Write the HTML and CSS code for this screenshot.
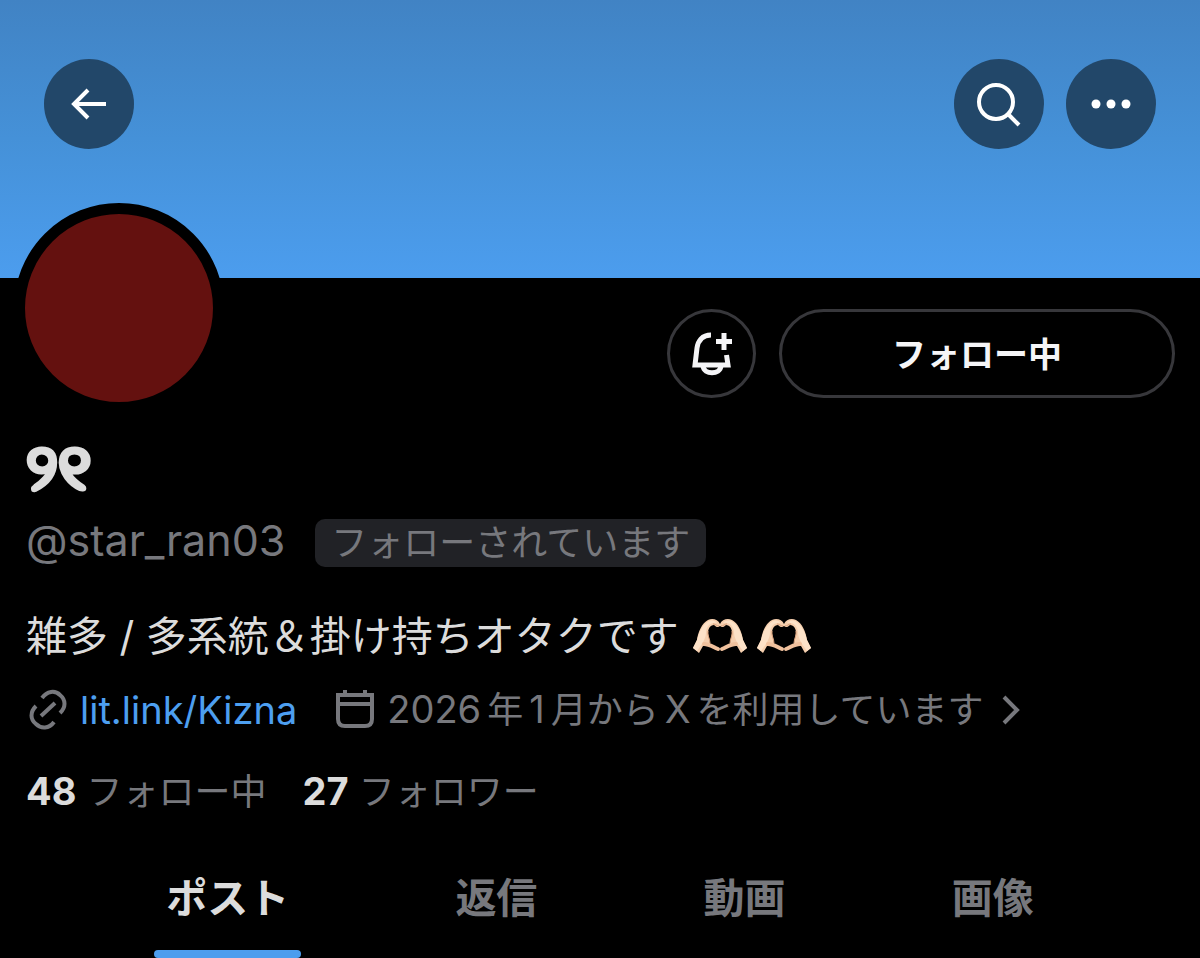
FILE: index.html
```html
<!DOCTYPE html>
<html lang="ja">

<head>
    <meta charset="utf-8" />
    <meta name="viewport" content="width=device-width, initial-scale=1" />
    <title>@star_ran03</title>
    <link rel="stylesheet" href="styles.css">
</head>

<body>
    <header class="banner">
        <button class="round" aria-label="戻る">
            <svg width="36" height="32" viewBox="0 0 36 32"><path d="M17 2 3 16l14 14M3 16h32" /></svg>
        </button>
        <div class="banner-right">
            <button class="round" aria-label="検索">
                <svg width="44" height="44" viewBox="0 0 44 44"><circle cx="19" cy="20" r="17" /><path d="m31 32 11 11" /></svg>
            </button>
            <button class="round" aria-label="その他">
                <svg class="dots" width="40" height="10" viewBox="0 0 40 10"><circle cx="5" cy="5" r="4.5" /><circle cx="20" cy="5" r="4.5" /><circle cx="35" cy="5" r="4.5" /></svg>
            </button>
        </div>
    </header>

    <main class="profile">
        <div class="top-row">
            <div class="avatar"></div>
            <div class="actions">
                <button class="bell" aria-label="通知">
                    <svg width="42" height="44" viewBox="0 0 42 44">
                        <path d="M20 3C11 3 7 9 6 16L4 33h33l-1.500-10" />
                        <path d="M12 34c1 9 17 9 18 0" />
                        <path d="M33 1v17M25 9.500h16" />
                    </svg>
                </button>
                <button class="follow">フォロー中</button>
            </div>
        </div>

        <h1 class="name">୨୧</h1>
        <div class="handle-row">
            <span class="handle">@star_ran03</span>
            <span class="badge">フォローされています</span>
        </div>

        <p class="bio">
            <span>雑多 / 多系統＆掛け持ちオタクです</span>
            <svg class="hands" viewBox="0 0 54 36" role="img" aria-label="ハートの手">
                <g id="hand">
                    <path fill="#f6cfae" d="M0 30 4 22C5 14 9 5 15 2c4-2 10-1 12 4v2c-2 2-4 1-6-1-4 0-6 4-6 8 1 5 2 8 2 12l-7 1-4 7z" />
                    <path fill="#fde2c8" d="M0 30 4 22C6 14 10 6 16 3c3-1 7 0 8 2-6-1-11 3-11 10 0 4-2 7-4 11l-5 7z" />
                    <path stroke="#f1c19d" stroke-width="4" stroke-linecap="round" d="M11 26c5 0 9 3 14 5" />
                    <path stroke="#d9a07b" stroke-width="1" d="M15 13c-1 4 2 8 2 12M20 6c2 0 4 2 6 2" />
                </g>
                <use href="#hand" transform="matrix(-1 0 0 1 54 0)" />
            </svg>
            <svg class="hands" viewBox="0 0 54 36" role="img" aria-label="ハートの手">
                <use href="#hand" />
                <use href="#hand" transform="matrix(-1 0 0 1 54 0)" />
            </svg>
        </p>

        <div class="meta">
            <svg width="40" height="40" viewBox="0 0 40 40">
                <path d="M14 8c5-7 13-8 18-3 6 5 6 12 0 18M26 32c-5 7-13 7-18 2-6-5-6-12 0-18M13 26l14-13" />
            </svg>
            <a href="#">lit.link/Kizna</a>
            <svg class="calendar" width="40" height="40" viewBox="0 0 40 40">
                <path d="M3 5h34v24q0 7-7 7H10q-7 0-7-7zM3 14h34M10 0v6M30 0v6" />
            </svg>
            <span class="joined">2026<span class="jp">年</span>1<span class="jp">月から</span>X<span class="jp">を利用しています</span></span>
            <svg class="chevron" width="18" height="30" viewBox="0 0 18 30"><path d="m2 2 13 13L2 28" /></svg>
        </div>

        <div class="counts">
            <a href="#"><b>48</b> フォロー中</a>
            <a href="#"><b>27</b> フォロワー</a>
        </div>
    </main>

    <nav class="tabs">
        <a href="#" class="active">ポスト</a>
        <a href="#">返信</a>
        <a href="#">動画</a>
        <a href="#">画像</a>
    </nav>
</body>

</html>
```
FILE: styles.css
```css
* {
    box-sizing: border-box;
}

body {
    margin: 0;
    background-color: #000;
    color: #dcdcdc;
    font-family: Inter, "Noto Sans CJK JP", sans-serif;
    overflow-x: hidden;
}

button {
    padding: 0;
    font-family: inherit;
    cursor: pointer;
}

a {
    color: inherit;
    text-decoration: none;
}

svg {
    flex: none;
    fill: none;
    stroke: currentColor;
    stroke-width: 4;
    overflow: visible;
}

.banner {
    display: flex;
    justify-content: space-between;
    align-items: flex-start;
    height: 278px;
    padding: 59px 44px 0;
    background: linear-gradient(#4183c4, #4591d8 50%, #4c9dee);
}

.banner-right {
    display: flex;
    gap: 22px;
}

.round {
    display: flex;
    align-items: center;
    justify-content: center;
    width: 90px;
    height: 90px;
    border: none;
    border-radius: 50%;
    background-color: #224769;
    color: #fff;
}

.round .dots {
    fill: #fff;
    stroke: none;
}

.profile {
    padding: 0 25px 0 26px;
}

.top-row {
    display: flex;
    justify-content: space-between;
    align-items: flex-start;
}

.avatar {
    width: 210px;
    height: 210px;
    margin: -75px 0 0 -12px;
    border: 11px solid #000;
    border-radius: 50%;
    background-color: #64110f;
}

.actions {
    display: flex;
    gap: 23px;
    margin-top: 31px;
}

.bell,
.follow {
    height: 89px;
    border: 3px solid #37373b;
    background-color: #000;
    color: #f5f5f7;
}

.bell {
    display: flex;
    align-items: center;
    justify-content: center;
    width: 89px;
    border-radius: 50%;
}

.bell svg {
    stroke-width: 5;
}

.follow {
    width: 396px;
    padding-bottom: 2px;
    border-radius: 45px;
    font-size: 34px;
    font-weight: 700;
}

.name {
    margin: 22px 0 0;
    font-size: 64px;
    line-height: 64px;
    -webkit-text-stroke: 3px #dcdcdc;
}

.handle-row {
    display: flex;
    align-items: center;
    gap: 30px;
    margin-top: 20px;
    color: #77787d;
}

.handle {
    padding-bottom: 6px;
    font-size: 43px;
    line-height: 42px;
}

.badge {
    padding: 0 16px;
    border-radius: 10px;
    background-color: #212226;
    font-size: 36px;
    line-height: 48px;
}

.bio {
    display: flex;
    align-items: center;
    gap: 10px;
    margin: 41px 0 0;
    font-size: 41px;
    line-height: 56px;
}

.bio span {
    margin-right: 4px;
}

.hands {
    width: 54px;
    height: 36px;
    stroke: none;
}

.meta {
    display: flex;
    align-items: center;
    margin: 21px 0 0 2px;
    color: #77787d;
    font-size: 38px;
    line-height: 48px;
}

.meta a {
    margin-left: 12px;
    color: #4d9ff0;
}

.calendar {
    margin: 0 12px 0 38px;
}

.jp {
    margin: 0 6px;
    font-size: 36px;
}

.chevron {
    margin-left: 12px;
}

.counts {
    display: flex;
    gap: 36px;
    margin-top: 33px;
    color: #77787d;
    font-size: 36px;
    line-height: 48px;
}

.counts b {
    color: #dcdcdc;
    font-size: 38px;
}

.tabs {
    display: flex;
    justify-content: space-evenly;
    margin-top: 52px;
    color: #77787d;
    font-size: 41px;
    font-weight: 700;
    line-height: 60px;
}

.tabs a {
    position: relative;
    padding-bottom: 30px;
}

.tabs .active {
    color: #dcdcdc;
}

.tabs .active::after {
    content: "";
    position: absolute;
    left: -12px;
    right: -12px;
    bottom: 0;
    height: 8px;
    border-radius: 4px;
    background-color: #4c9dee;
}
```
